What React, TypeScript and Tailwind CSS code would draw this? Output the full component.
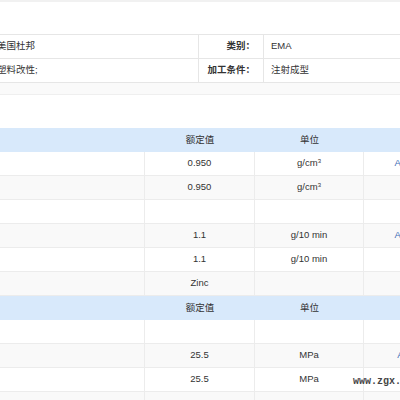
import React from "react";

interface Row {
  value: string;
  unit: React.ReactNode;
  method: string;
}

const group1: Row[] = [
  { value: "0.950", unit: <>g/cm<sup className="text-[6px]">3</sup></>, method: "ASTM D1505" },
  { value: "0.950", unit: <>g/cm<sup className="text-[6px]">3</sup></>, method: "" },
  { value: "", unit: "", method: "" },
  { value: "1.1", unit: "g/10 min", method: "ASTM D1238" },
  { value: "1.1", unit: "g/10 min", method: "" },
  { value: "Zinc", unit: "", method: "" },
];

const group2: Row[] = [
  { value: "", unit: "", method: "" },
  { value: "25.5", unit: "MPa", method: "ASTM D638" },
  { value: "25.5", unit: "MPa", method: "" },
  { value: "", unit: "", method: "" },
];

function HeaderRow() {
  return (
    <div className="flex h-[24px] bg-[#d8e9fb] text-[#333] items-center">
      <div className="w-[145px] shrink-0" />
      <div className="w-[110px] shrink-0 text-center">额定值</div>
      <div className="w-[109px] shrink-0 text-center">单位</div>
      <div className="w-[118px] shrink-0 text-center">测试方法</div>
    </div>
  );
}

function DataRow({ row, shade }: { row: Row; shade: boolean }) {
  return (
    <div className={`flex h-[24px] border-b border-[#ececec] text-[#333] ${shade ? "bg-[#f9f9f9]" : "bg-white"}`}>
      <div className="w-[145px] shrink-0 border-r border-[#ececec]" />
      <div className="w-[110px] shrink-0 border-r border-[#ececec] flex items-center justify-center">{row.value}</div>
      <div className="w-[109px] shrink-0 border-r border-[#ececec] flex items-center justify-center">{row.unit}</div>
      <div className="w-[118px] shrink-0 flex items-center justify-center text-[#3d6db5] whitespace-nowrap">{row.method}</div>
    </div>
  );
}

export default function App() {
  return (
    <div
      className="relative w-[400px] h-[400px] overflow-hidden bg-white text-[9.5px]"
      style={{ fontFamily: '"Liberation Sans", "Noto Sans CJK SC", sans-serif' }}
    >
      {/* top panel edge */}
      <div className="h-[34px] border-t-2 border-[#f1f1f1]" />

      {/* basic info */}
      <div className="border-t border-[#e6e6e6] -ml-[3px] w-[410px]">
        <div className="grid grid-cols-[202px_65px_1fr] h-[24px] border-b border-[#e6e6e6] text-[#333]">
          <div className="flex items-center border-r border-[#e6e6e6]">美国杜邦</div>
          <div className="flex items-center justify-end pr-[8px] border-r border-[#e6e6e6] font-bold">类别：</div>
          <div className="flex items-center pl-[7px]">EMA</div>
        </div>
        <div className="grid grid-cols-[202px_65px_1fr] h-[24px] border-b border-[#e6e6e6] text-[#333]">
          <div className="flex items-center border-r border-[#e6e6e6]">塑料改性;</div>
          <div className="flex items-center justify-end pr-[8px] border-r border-[#e6e6e6] font-bold">加工条件：</div>
          <div className="flex items-center pl-[7px]">注射成型</div>
        </div>
      </div>
      <div className="h-[12px] bg-[#fafafa] border-b border-[#efefef]" />
      <div className="h-[33px]" />

      {/* properties */}
      <div className="w-[482px]">
        <HeaderRow />
        {group1.map((r, i) => (
          <DataRow key={"a" + i} row={r} shade={i % 2 === 1} />
        ))}
        <HeaderRow />
        {group2.map((r, i) => (
          <DataRow key={"b" + i} row={r} shade={i % 2 === 1} />
        ))}
      </div>

      {/* watermark */}
      <div
        className="absolute left-[353px] top-[374px] text-[10px] font-bold text-[#444] whitespace-nowrap"
        style={{ fontFamily: '"Liberation Mono", monospace' }}
      >
        www.zgx.net
      </div>
    </div>
  );
}
